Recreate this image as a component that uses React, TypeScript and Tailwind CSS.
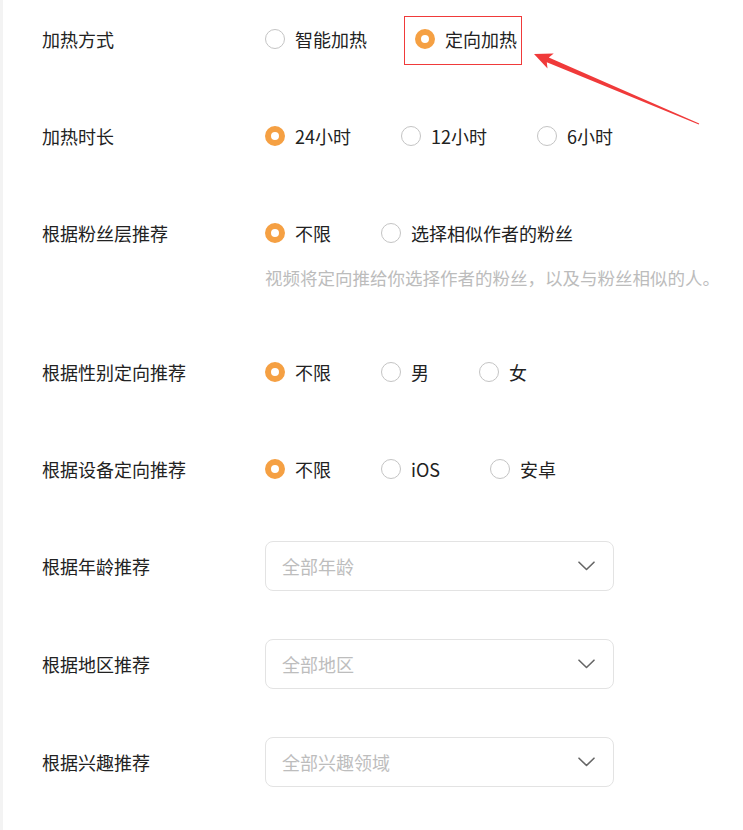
import type { ReactNode } from "react";

type Option = { label: string; checked?: boolean };

const FONT = "font-['Microsoft_YaHei','Noto_Sans_CJK_SC',sans-serif]";

function Radio({ label, checked }: Option) {
  return (
    <label className="inline-flex items-center gap-[10px] cursor-pointer">
      <span
        className={
          checked
            ? "box-border h-5 w-5 shrink-0 rounded-full border-[6px] border-[#f5a043] bg-white"
            : "box-border h-5 w-5 shrink-0 rounded-full border border-[#c4c4c4] bg-white"
        }
      />
      <span className="text-[18px] leading-[50px] text-[#222]">{label}</span>
    </label>
  );
}

function RadioGroup({ options, wide = true }: { options: Option[]; wide?: boolean }) {
  return (
    <div className={wide ? "flex h-[50px] items-center gap-[50px]" : "flex h-[50px] items-center gap-12"}>
      {options.map((o) => (
        <Radio key={o.label} {...o} />
      ))}
    </div>
  );
}

function Select({ placeholder }: { placeholder: string }) {
  return (
    <div className="flex h-[50px] w-[349px] items-center justify-between rounded-lg border border-[#e3e3e3] bg-white pl-4 pr-[18px]">
      <span className="text-[18px] text-[#bdbdbd]">{placeholder}</span>
      <svg width="17" height="10" viewBox="0 0 17 10" fill="none">
        <path d="M1 1.2l7.5 7.3L16 1.2" stroke="#666" strokeWidth="1.6" strokeLinecap="round" strokeLinejoin="round" />
      </svg>
    </div>
  );
}

function FormItem({ label, children, mb = "mb-[47px]" }: { label: string; children: ReactNode; mb?: string }) {
  return (
    <div className={`flex items-start ${mb}`}>
      <div className="w-[223px] shrink-0 text-[18px] leading-[50px] text-[#222]">{label}</div>
      <div className="flex flex-col">{children}</div>
    </div>
  );
}

export default function App() {
  return (
    <div className={`relative min-h-[830px] w-[743px] overflow-hidden bg-white ${FONT}`}>
      <div className="flex min-h-[830px]">
        <div className="w-[3px] shrink-0 bg-[#f3f3f3]" />
        <div className="flex-1 pl-[39px] pt-[14px]">
          <FormItem label="加热方式">
            <RadioGroup wide={false} options={[{ label: "智能加热" }, { label: "定向加热", checked: true }]} />
          </FormItem>
          <FormItem label="加热时长">
            <RadioGroup options={[{ label: "24小时", checked: true }, { label: "12小时" }, { label: "6小时" }]} />
          </FormItem>
          <FormItem label="根据粉丝层推荐" mb="mb-[49px]">
            <RadioGroup options={[{ label: "不限", checked: true }, { label: "选择相似作者的粉丝" }]} />
            <div className="whitespace-nowrap text-[17.5px] leading-[40px] text-[#bcbcbc]">
              视频将定向推给你选择作者的粉丝，以及与粉丝相似的人。
            </div>
          </FormItem>
          <FormItem label="根据性别定向推荐">
            <RadioGroup options={[{ label: "不限", checked: true }, { label: "男" }, { label: "女" }]} />
          </FormItem>
          <FormItem label="根据设备定向推荐">
            <RadioGroup options={[{ label: "不限", checked: true }, { label: "iOS" }, { label: "安卓" }]} />
          </FormItem>
          <FormItem label="根据年龄推荐" mb="mb-[48px]">
            <Select placeholder="全部年龄" />
          </FormItem>
          <FormItem label="根据地区推荐" mb="mb-[48px]">
            <Select placeholder="全部地区" />
          </FormItem>
          <FormItem label="根据兴趣推荐" mb="mb-0">
            <Select placeholder="全部兴趣领域" />
          </FormItem>
        </div>
      </div>

      {/* annotation: red box + arrow */}
      <svg className="pointer-events-none absolute left-0 top-0" width="743" height="830">
        <rect x="404.5" y="16.5" width="117" height="48" fill="none" stroke="#f03a3a" strokeWidth="1" />
        <polygon
          points="534,54 553.7,53.6 548.8,57.6 699.2,123.4 698.8,124.6 546.8,62.2 547.5,68.4"
          fill="#f03a3a"
        />
      </svg>
    </div>
  );
}
